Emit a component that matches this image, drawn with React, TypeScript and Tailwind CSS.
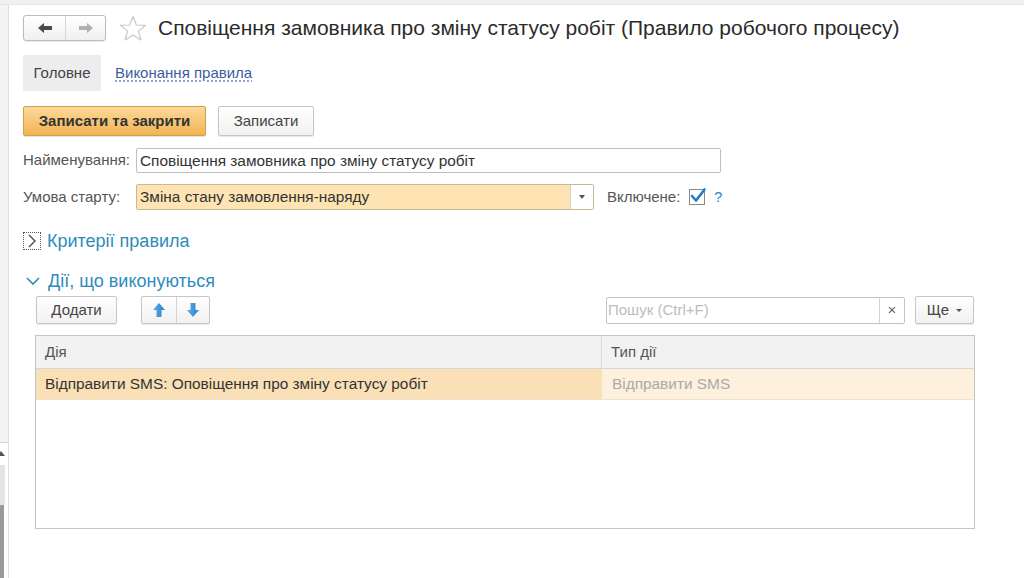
import React from "react";

function Arrow({ dir, color }: { dir: "left" | "right"; color: string }) {
  return (
    <svg width="16" height="12" viewBox="0 0 16 12">
      {dir === "left" ? (
        <path d="M1 6 L7 1 L7 4 L15 4 L15 8 L7 8 L7 11 Z" fill={color} />
      ) : (
        <path d="M15 6 L9 1 L9 4 L1 4 L1 8 L9 8 L9 11 Z" fill={color} />
      )}
    </svg>
  );
}

function BlockArrow({ up }: { up: boolean }) {
  return (
    <svg width="14" height="16" viewBox="0 0 14 16">
      <defs>
        <linearGradient id={up ? "gu" : "gd"} x1="0" y1="0" x2="1" y2="0">
          <stop offset="0" stopColor="#5aaee6" />
          <stop offset="1" stopColor="#2f7fc4" />
        </linearGradient>
      </defs>
      {up ? (
        <path d="M7 1 L13 8 L9.5 8 L9.5 15 L4.5 15 L4.5 8 L1 8 Z" fill={`url(#gu)`} />
      ) : (
        <path d="M7 15 L13 8 L9.5 8 L9.5 1 L4.5 1 L4.5 8 L1 8 Z" fill={`url(#gd)`} />
      )}
    </svg>
  );
}

export default function App() {
  return (
    <div className="w-[1024px] h-[578px] bg-white flex flex-col overflow-hidden font-['Liberation_Sans',Arial,sans-serif] text-[#333]">
      <div className="h-[5px] bg-[#eef0f2] border-b border-[#e3e6e9] shrink-0" />
      <div className="flex flex-1 min-h-0">
        {/* left sidebar */}
        <div className="w-[9px] shrink-0 flex flex-col border-r border-[#dcdfe2]">
          <div className="h-[438px] bg-[#f2f4f6] border-b border-[#d6d9dc]" />
          <div className="h-[22px] relative">
            <div className="absolute left-[-3px] top-[8px] w-0 h-0 border-l-[4px] border-r-[4px] border-b-[5px] border-l-transparent border-r-transparent border-b-[#555]" />
          </div>
          <div className="h-[40px] w-[5px] bg-[#e4e4e4]" />
          <div className="flex-1 w-[4px] bg-[#9a9a9a]" />
        </div>

        {/* main */}
        <div className="flex-1 pl-[14px] pt-[10px] flex flex-col">
          {/* title row */}
          <div className="flex items-center h-[26px]">
            <div className="flex h-[26px] w-[83px] border border-[#bcbcbc] rounded-[3px] bg-gradient-to-b from-white to-[#f0f0f0] shadow-[0_1px_1px_rgba(0,0,0,0.08)]">
              <div className="w-[42px] flex items-center justify-center border-r border-[#d6d6d6]">
                <Arrow dir="left" color="#4a4a4a" />
              </div>
              <div className="flex-1 flex items-center justify-center">
                <Arrow dir="right" color="#b0b0b0" />
              </div>
            </div>
            <svg width="28" height="27" viewBox="0 0 28 27" className="ml-[13px]">
              <path
                d="M14 1.5 L17.4 10 L26.5 10.4 L19.4 16.1 L21.9 25 L14 19.9 L6.1 25 L8.6 16.1 L1.5 10.4 L10.6 10 Z"
                fill="none"
                stroke="#c8c8c8"
                strokeWidth="1.2"
                strokeLinejoin="round"
              />
            </svg>
            <div className="ml-[11px] text-[21px] leading-[26px] text-[#2b2b2b] whitespace-nowrap">
              Сповіщення замовника про зміну статусу робіт (Правило робочого процесу)
            </div>
          </div>

          {/* tabs */}
          <div className="flex items-center mt-[14px] h-[36px]">
            <div className="h-full w-[78px] bg-[#ededed] flex items-center justify-center text-[15px] text-[#444]">Головне</div>
            <div className="ml-[14px] text-[15px] text-[#3b5d9e] underline decoration-dotted decoration-[#6b84b8] underline-offset-[3px]">
              Виконання правила
            </div>
          </div>

          {/* buttons */}
          <div className="flex items-center mt-[15px] gap-[12px]">
            <div className="w-[183px] h-[30px] rounded-[2px] border border-[#d59d45] bg-gradient-to-b from-[#fcd998] to-[#f1b452] flex items-center justify-center text-[15px] font-bold text-[#333] shadow-[0_1px_1px_rgba(0,0,0,0.12)]">
              Записати та закрити
            </div>
            <div className="w-[96px] h-[30px] rounded-[2px] border border-[#c6c6c6] bg-gradient-to-b from-white to-[#f1f1f1] flex items-center justify-center text-[15px] text-[#444] shadow-[0_1px_1px_rgba(0,0,0,0.1)]">
              Записати
            </div>
          </div>

          {/* name row */}
          <div className="flex items-center mt-[12px] h-[25px]">
            <div className="w-[113px] text-[15px] text-[#555] whitespace-nowrap">Найменування:</div>
            <div className="w-[585px] h-[25px] border border-[#bfbfbf] rounded-[2px] flex items-center px-[3px] text-[15.4px] text-[#333]">
              Сповіщення замовника про зміну статусу робіт
            </div>
          </div>

          {/* condition row */}
          <div className="flex items-center mt-[11px] h-[26px]">
            <div className="w-[113px] text-[15px] text-[#555] whitespace-nowrap">Умова старту:</div>
            <div className="w-[458px] h-[26px] border border-[#c9b896] rounded-[2px] flex">
              <div className="flex-1 bg-[#fde4b2] flex items-center px-[3px] text-[15.4px] text-[#333]">
                Зміна стану замовлення-наряду
              </div>
              <div className="w-[23px] border-l border-[#cfcfcf] bg-white flex items-center justify-center">
                <div className="w-0 h-0 border-l-[3px] border-r-[3px] border-t-[4px] border-l-transparent border-r-transparent border-t-[#555]" />
              </div>
            </div>
            <div className="ml-[13px] w-[82px] text-[15px] text-[#555] whitespace-nowrap">Включене:</div>
            <div className="w-[16px] h-[16px] border border-[#8a8a8a] bg-white relative">
              <svg width="18" height="18" viewBox="0 0 18 18" className="absolute left-[-1px] top-[-3px]">
                <path d="M3 9 L7 13.5 L15.5 2.5" fill="none" stroke="#1f7cc8" strokeWidth="2.6" strokeLinecap="round" strokeLinejoin="round" />
              </svg>
            </div>
            <div className="ml-[9px] text-[15px] text-[#2f86c8]">?</div>
          </div>

          {/* criteria */}
          <div className="flex items-center mt-[21px] h-[20px]">
            <div className="w-[18px] h-[18px] border border-dotted border-[#555] flex items-center justify-center">
              <svg width="10" height="14" viewBox="0 0 10 14">
                <path d="M2 1 L8 7 L2 13" fill="none" stroke="#3a4f66" strokeWidth="1.4" />
              </svg>
            </div>
            <div className="ml-[6px] text-[18px] text-[#2e8cbc]">Критерії правила</div>
          </div>

          {/* actions heading */}
          <div className="flex items-center mt-[20px] h-[20px]">
            <svg width="18" height="12" viewBox="0 0 18 12" className="ml-[1px]">
              <path d="M3 3 L9 9 L15 3" fill="none" stroke="#2e8cbc" strokeWidth="1.6" />
            </svg>
            <div className="ml-[6px] text-[18px] text-[#2e8cbc]">Дії, що виконуються</div>
          </div>

          {/* toolbar */}
          <div className="flex items-center mt-[5px] h-[28px] pl-[13px]">
            <div className="w-[81px] h-[28px] rounded-[2px] border border-[#c6c6c6] bg-gradient-to-b from-white to-[#f1f1f1] flex items-center justify-center text-[15px] text-[#444] shadow-[0_1px_1px_rgba(0,0,0,0.1)]">
              Додати
            </div>
            <div className="ml-[24px] w-[69px] h-[28px] rounded-[2px] border border-[#c6c6c6] bg-gradient-to-b from-white to-[#f1f1f1] flex shadow-[0_1px_1px_rgba(0,0,0,0.1)]">
              <div className="w-[35px] border-r border-[#d3d3d3] flex items-center justify-center">
                <BlockArrow up={true} />
              </div>
              <div className="flex-1 flex items-center justify-center">
                <BlockArrow up={false} />
              </div>
            </div>
            <div className="ml-[396px] w-[299px] h-[27px] border border-[#c3c3c3] rounded-[2px] flex">
              <div className="flex-1 flex items-center px-[1px] text-[15px] text-[#bdbdbd]">Пошук (Ctrl+F)</div>
              <div className="w-[25px] border-l border-[#d3d3d3] flex items-center justify-center text-[15px] text-[#666]">×</div>
            </div>
            <div className="ml-[10px] w-[59px] h-[28px] rounded-[2px] border border-[#c6c6c6] bg-gradient-to-b from-white to-[#f1f1f1] flex items-center justify-center text-[15px] text-[#444] shadow-[0_1px_1px_rgba(0,0,0,0.1)]">
              Ще
              <div className="ml-[7px] w-0 h-0 border-l-[3px] border-r-[3px] border-t-[3px] border-l-transparent border-r-transparent border-t-[#555]" />
            </div>
          </div>

          {/* table */}
          <div className="mt-[11px] ml-[12px] w-[940px] h-[194px] border border-[#c4c4c4] flex flex-col">
            <div className="h-[33px] bg-[#f2f2f2] border-b border-[#d6d6d6] flex text-[15px] text-[#555]">
              <div className="w-[566px] border-r border-[#dcdcdc] flex items-center pl-[9px]">Дія</div>
              <div className="flex-1 flex items-center pl-[9px]">Тип дії</div>
            </div>
            <div className="h-[31px] flex text-[15.4px] border-b border-[#efe3d0]">
              <div className="w-[566px] bg-[#fae0b6] flex items-center pl-[9px] text-[#333]">
                Відправити SMS: Оповіщення про зміну статусу робіт
              </div>
              <div className="flex-1 bg-[#fdf0dd] flex items-center pl-[10px] text-[#aaa]">Відправити SMS</div>
            </div>
          </div>
        </div>
      </div>
    </div>
  );
}
